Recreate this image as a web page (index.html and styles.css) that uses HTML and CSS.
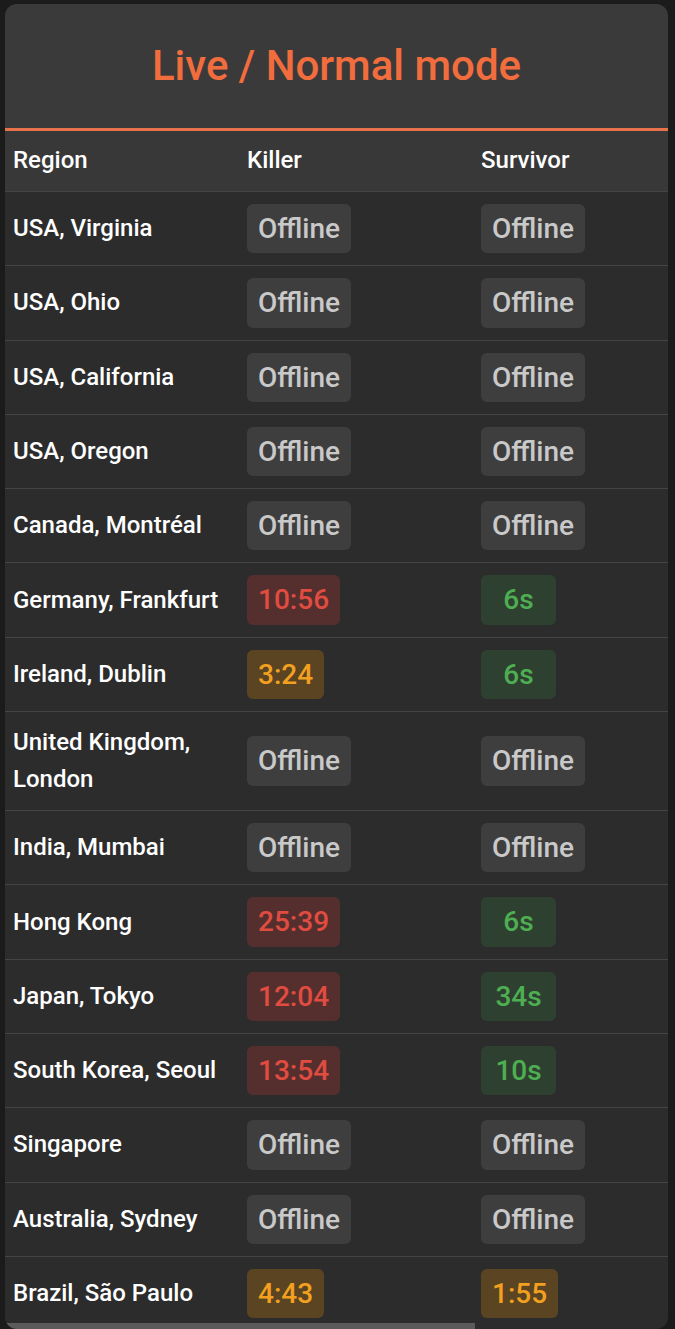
FILE: index.html
```html
<!DOCTYPE html>
<html lang="en">
<head>
<meta charset="utf-8">
<title>Live / Normal mode</title>
<link rel="stylesheet" href="styles.css">
</head>
<body>
<section class="card">
  <h1 class="title">Live / Normal mode</h1>
  <div class="scroller">
    <table class="queue">
      <thead>
        <tr><th>Region</th><th>Killer</th><th>Survivor</th><th></th></tr>
      </thead>
      <tbody>
        <tr><td>USA, Virginia</td><td><span class="badge off">Offline</span></td><td><span class="badge off">Offline</span></td><td></td></tr>
        <tr><td>USA, Ohio</td><td><span class="badge off">Offline</span></td><td><span class="badge off">Offline</span></td><td></td></tr>
        <tr><td>USA, California</td><td><span class="badge off">Offline</span></td><td><span class="badge off">Offline</span></td><td></td></tr>
        <tr><td>USA, Oregon</td><td><span class="badge off">Offline</span></td><td><span class="badge off">Offline</span></td><td></td></tr>
        <tr><td>Canada, Montréal</td><td><span class="badge off">Offline</span></td><td><span class="badge off">Offline</span></td><td></td></tr>
        <tr><td>Germany, Frankfurt</td><td><span class="badge red">10:56</span></td><td><span class="badge green">6s</span></td><td></td></tr>
        <tr><td>Ireland, Dublin</td><td><span class="badge amber">3:24</span></td><td><span class="badge green">6s</span></td><td></td></tr>
        <tr><td>United Kingdom, London</td><td><span class="badge off">Offline</span></td><td><span class="badge off">Offline</span></td><td></td></tr>
        <tr><td>India, Mumbai</td><td><span class="badge off">Offline</span></td><td><span class="badge off">Offline</span></td><td></td></tr>
        <tr><td>Hong Kong</td><td><span class="badge red">25:39</span></td><td><span class="badge green">6s</span></td><td></td></tr>
        <tr><td>Japan, Tokyo</td><td><span class="badge red">12:04</span></td><td><span class="badge green">34s</span></td><td></td></tr>
        <tr><td>South Korea, Seoul</td><td><span class="badge red">13:54</span></td><td><span class="badge green">10s</span></td><td></td></tr>
        <tr><td>Singapore</td><td><span class="badge off">Offline</span></td><td><span class="badge off">Offline</span></td><td></td></tr>
        <tr><td>Australia, Sydney</td><td><span class="badge off">Offline</span></td><td><span class="badge off">Offline</span></td><td></td></tr>
        <tr class="last"><td>Brazil, São Paulo</td><td><span class="badge amber">4:43</span></td><td><span class="badge amber">1:55</span></td><td></td></tr>
      </tbody>
    </table>
  </div>
  <div class="scrolltrack"><div class="scrollthumb"></div></div>
</section>
</body>
</html>
```

FILE: styles.css
```css
html, body {
  margin: 0;
  padding: 0;
  background: #1b1b1b;
}
body {
  padding: 4px 7px 0 5px;
  font-family: Roboto, "Liberation Sans", sans-serif;
  color: #ffffff;
}
.card {
  background: #2c2c2c;
  border-radius: 12px;
  overflow: hidden;
}
.title {
  margin: 0;
  background: #3a3a3a;
  color: #f26d3d;
  font-size: 42px;
  font-weight: 500;
  text-align: center;
  line-height: 52px;
  padding: 36px 0 36px;
  border-bottom: 3px solid #e8734a;
}
.scroller {
  overflow-x: auto;
  scrollbar-width: none;
}
.scroller::-webkit-scrollbar {
  display: none;
}
.scrolltrack {
  height: 6px;
}
.scrollthumb {
  width: 470px;
  height: 6px;
  background: #5b5b5b;
}
.queue {
  width: 936px;
  table-layout: fixed;
  border-collapse: collapse;
  font-size: 24px;
  font-weight: 500;
}
.queue th, .queue td {
  width: 218px;
  text-align: left;
  padding: 12px 8px;
  line-height: 37px;
  vertical-align: middle;
}
.queue th {
  background: #383838;
  font-weight: 500;
  padding-top: 11px;
  padding-bottom: 12px;
}
.queue tr {
  border-bottom: 1px solid #444444;
}
.queue tr.last {
  border-bottom: none;
}
.queue tr.last td {
  padding-bottom: 5px;
}
.badge {
  display: inline-block;
  box-sizing: border-box;
  min-width: 75px;
  text-align: center;
  font-size: 28px;
  font-weight: 500;
  line-height: 29.3px;
  padding: 10px 11px;
  border-radius: 6px;
}
.off {
  background: #3e3e3e;
  color: #c9c9c9;
}
.red {
  background: #552f2e;
  color: #e14c41;
}
.green {
  background: #2e4130;
  color: #4eae52;
}
.amber {
  background: #5a4421;
  color: #f3a020;
}
```
